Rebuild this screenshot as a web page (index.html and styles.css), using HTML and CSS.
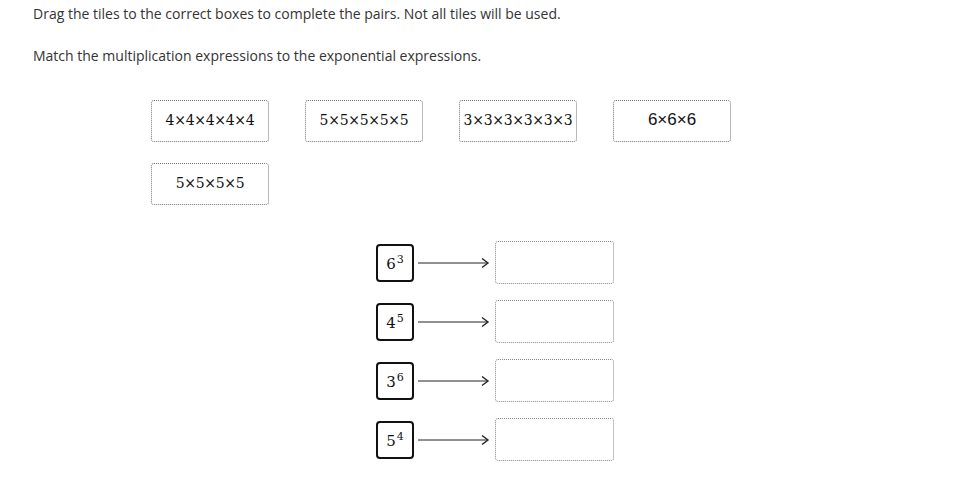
FILE: index.html
```html
<!DOCTYPE html>
<html>
<head>
<meta charset="utf-8">
<link rel="stylesheet" href="styles.css">
</head>
<body>
<div class="page">
  <p class="instr first">Drag the tiles to the correct boxes to complete the pairs. Not all tiles will be used.</p>
  <p class="instr second">Match the multiplication expressions to the exponential expressions.</p>
  <div class="tiles">
    <div class="tile">4×4×4×4×4</div>
    <div class="tile">5×5×5×5×5</div>
    <div class="tile">3×3×3×3×3×3</div>
    <div class="tile sans">6×6×6</div>
    <div class="tile">5×5×5×5</div>
  </div>
  <div class="pairs">
    <div class="pair">
      <div class="term"><span>6<sup>3</sup></span></div>
      <svg class="arrow" width="72" height="12" viewBox="0 0 72 12"><line x1="0" y1="6" x2="70" y2="6" stroke="#222" stroke-width="1"/><polyline points="64,1.5 70,6 64,10.5" fill="none" stroke="#222" stroke-width="1.4"/></svg>
      <div class="drop"></div>
    </div>
    <div class="pair">
      <div class="term"><span>4<sup>5</sup></span></div>
      <svg class="arrow" width="72" height="12" viewBox="0 0 72 12"><line x1="0" y1="6" x2="70" y2="6" stroke="#222" stroke-width="1"/><polyline points="64,1.5 70,6 64,10.5" fill="none" stroke="#222" stroke-width="1.4"/></svg>
      <div class="drop"></div>
    </div>
    <div class="pair">
      <div class="term"><span>3<sup>6</sup></span></div>
      <svg class="arrow" width="72" height="12" viewBox="0 0 72 12"><line x1="0" y1="6" x2="70" y2="6" stroke="#222" stroke-width="1"/><polyline points="64,1.5 70,6 64,10.5" fill="none" stroke="#222" stroke-width="1.4"/></svg>
      <div class="drop"></div>
    </div>
    <div class="pair">
      <div class="term"><span>5<sup>4</sup></span></div>
      <svg class="arrow" width="72" height="12" viewBox="0 0 72 12"><line x1="0" y1="6" x2="70" y2="6" stroke="#222" stroke-width="1"/><polyline points="64,1.5 70,6 64,10.5" fill="none" stroke="#222" stroke-width="1.4"/></svg>
      <div class="drop"></div>
    </div>
  </div>
</div>
</body>
</html>
```
FILE: styles.css
```css
html, body {
  margin: 0;
  padding: 0;
  background: #fff;
}
.page {
  padding: 4px 0 0 33px;
  font-family: "Open Sans", sans-serif;
  color: #333;
}
.instr {
  margin: 0;
  font-size: 14px;
  line-height: 20px;
}
.second {
  margin-top: 22px;
}
.tiles {
  display: flex;
  flex-wrap: wrap;
  width: 580px;
  column-gap: 36px;
  row-gap: 21px;
  margin: 34px 0 0 118px;
}
.tile {
  box-sizing: border-box;
  width: 118px;
  height: 42px;
  padding-bottom: 3px;
  border: 1px dotted #777;
  border-radius: 3px;
  display: flex;
  align-items: center;
  justify-content: center;
  font-family: "DejaVu Serif", "Liberation Serif", serif;
  font-size: 14px;
  color: #111;
  letter-spacing: -0.3px;
}
.tile.sans {
  font-family: "Liberation Sans", sans-serif;
  font-size: 17px;
  letter-spacing: 0;
}
.pairs {
  display: flex;
  flex-direction: column;
  gap: 16px;
  margin: 36px 0 0 343px;
}
.pair {
  display: flex;
  align-items: center;
  height: 43px;
}
.term {
  box-sizing: border-box;
  width: 38px;
  height: 38px;
  border: 2px solid #111;
  border-radius: 4px;
  display: flex;
  align-items: center;
  justify-content: center;
  font-family: "DejaVu Serif", serif;
  font-size: 15px;
  line-height: 18px;
  color: #111;
  padding-top: 2px;
}
.term sup {
  font-size: 11px;
  line-height: 0;
  vertical-align: 6px;
  margin-left: 1px;
}
.arrow {
  margin-left: 4px;
  display: block;
}
.drop {
  box-sizing: border-box;
  width: 119px;
  height: 43px;
  margin-left: 5px;
  border: 1px dotted #888;
  border-radius: 3px;
}
```
